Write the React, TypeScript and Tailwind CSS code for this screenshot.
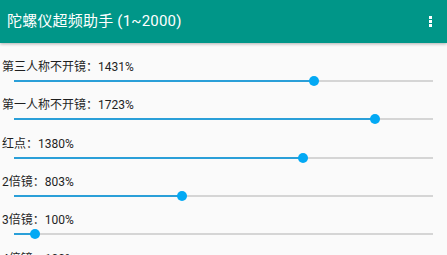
const FONT = { fontFamily: "Roboto, 'Noto Sans CJK SC', sans-serif" };

const ROWS = [
  { label: "第三人称不开镜", value: 1431 },
  { label: "第一人称不开镜", value: 1723 },
  { label: "红点", value: 1380 },
  { label: "2倍镜", value: 803 },
  { label: "3倍镜", value: 100 },
  { label: "4倍镜", value: 100 },
];

const MIN = 1;
const MAX = 2000;

function Seek({ value }: { value: number }) {
  const pct = ((value - MIN) / (MAX - MIN)) * 100;
  return (
    <div className="px-[14px] h-[12px] flex items-center">
      <div className="relative w-full h-[2px] bg-[#d5d5d5]">
        <div className="absolute left-0 top-0 h-full bg-[#2a9fd8]" style={{ width: `${pct}%` }} />
        <div
          className="absolute top-1/2 w-[10px] h-[10px] -ml-[5px] -mt-[5px] rounded-full bg-[#03a9f4]"
          style={{ left: `${pct}%` }}
        />
      </div>
    </div>
  );
}

export default function App() {
  return (
    <div className="w-[447px] h-[255px] overflow-hidden bg-[#fafafa]" style={FONT}>
      <div className="relative z-10 h-[43px] bg-[#009688] flex items-center justify-between pl-[7px] pr-[15px] shadow-[0_1px_3px_rgba(0,0,0,0.3)]">
        <span className="text-[15px] text-white leading-none tracking-[0.2px]">陀螺仪超频助手 (1~2000)</span>
        <div className="flex flex-col gap-[1px]">
          <span className="w-[3px] h-[3px] bg-white" />
          <span className="w-[3px] h-[3px] bg-white" />
          <span className="w-[3px] h-[3px] bg-white" />
        </div>
      </div>
      <div className="pt-[16px]">
        {ROWS.map((r) => (
          <div key={r.label} className="h-[38.33px]">
            <div className="h-[16px] pl-[2px] flex items-center text-[12px] text-[#1f1f1f] leading-none">
              {r.label}：{r.value}%
            </div>
            <Seek value={r.value} />
          </div>
        ))}
      </div>
    </div>
  );
}
